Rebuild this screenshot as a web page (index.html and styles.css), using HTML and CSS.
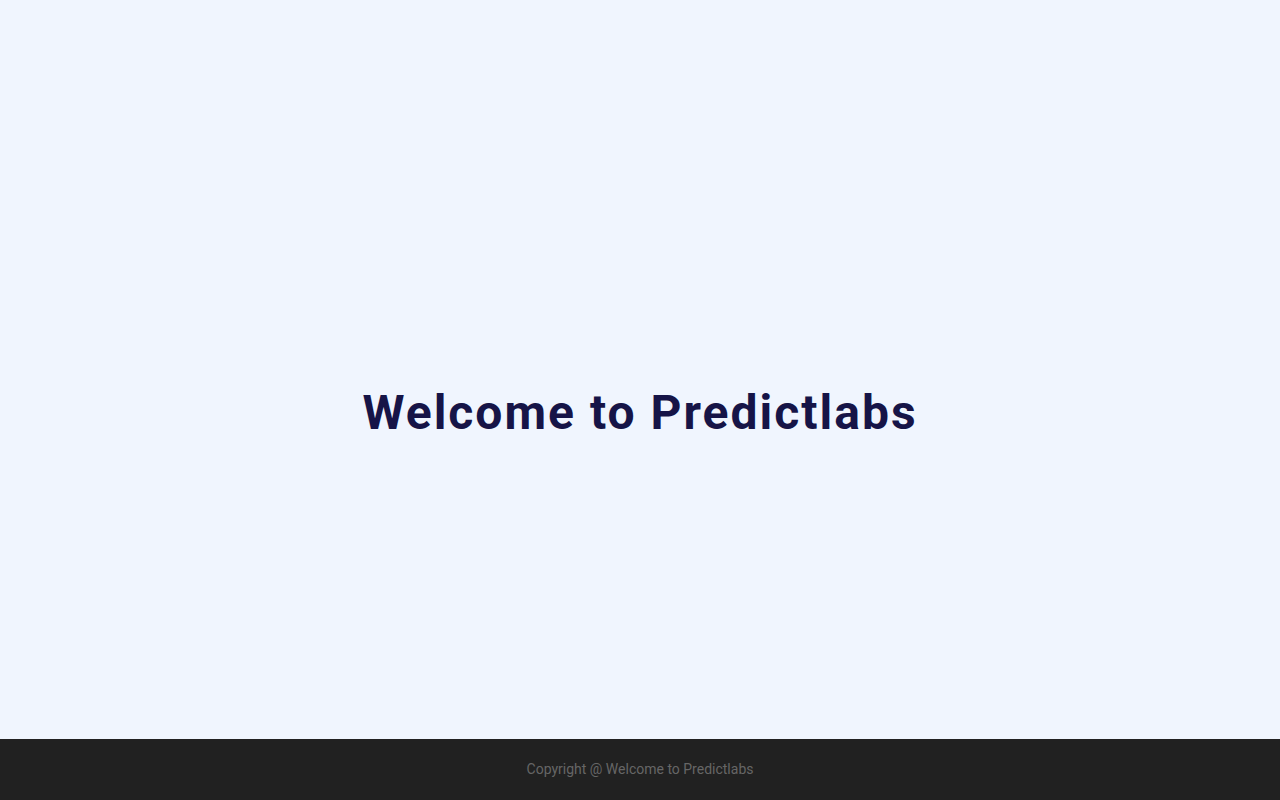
FILE: index.html
```html
<!DOCTYPE html>
<html lang="en">
<head>
<meta charset="utf-8">
<title>Predictlabs</title>
<link rel="stylesheet" href="styles.css">
</head>
<body>
<main class="hero">
  <h1 class="hero-title">Welcome to Predictlabs</h1>
</main>
<footer class="footer">
  <p class="footer-text">Copyright @ Welcome to Predictlabs</p>
</footer>
</body>
</html>
```
FILE: styles.css
```css
html, body {
  margin: 0;
  padding: 0;
  height: 100%;
}
body {
  display: flex;
  flex-direction: column;
  min-height: 100vh;
  background: #f0f5fe;
  font-family: Roboto, "Liberation Sans", sans-serif;
}
.hero {
  flex: 1;
  display: flex;
  align-items: center;
  justify-content: center;
  padding-top: 87px;
}
.hero-title {
  margin: 0;
  font-size: 48px;
  font-weight: 700;
  letter-spacing: 2px;
  color: #161447;
  line-height: 1.2;
}
.footer {
  height: 61px;
  box-sizing: border-box;
  padding-bottom: 2px;
  background: #212121;
  display: flex;
  align-items: center;
  justify-content: center;
}
.footer-text {
  margin: 0;
  font-size: 14px;
  color: #666666;
}
```
